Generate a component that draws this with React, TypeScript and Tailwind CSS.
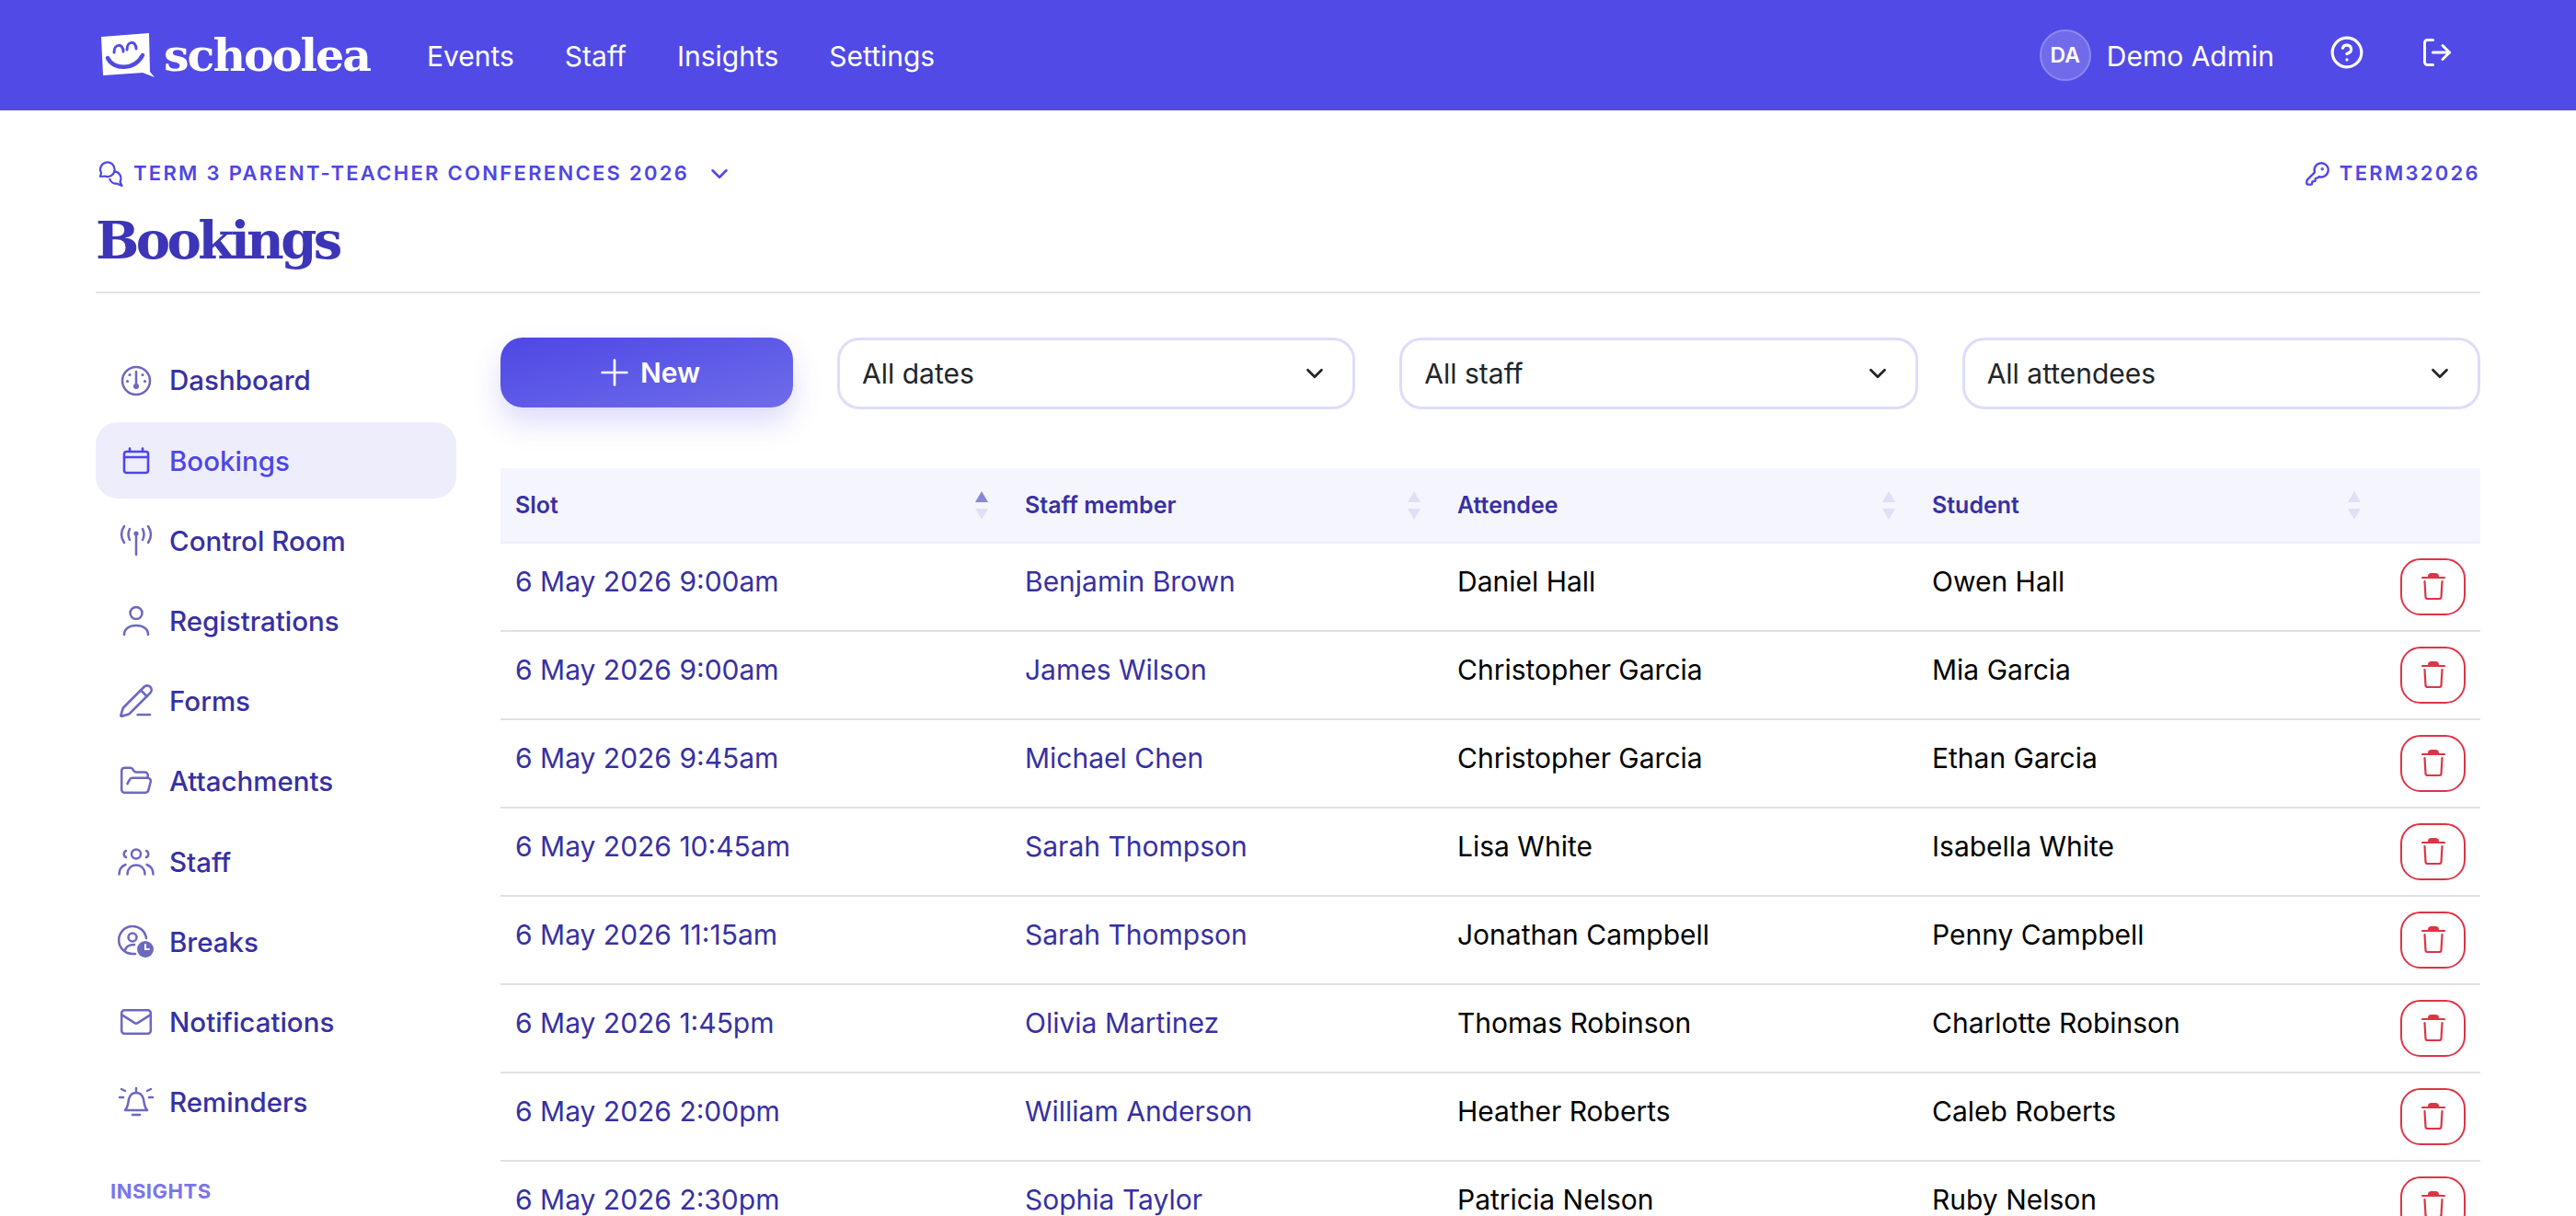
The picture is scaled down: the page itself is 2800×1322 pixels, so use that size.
import { ChevronDown, CircleHelp, FolderOpen, KeyRound, LogOut, Mail, PencilLine, Plus } from "lucide-react";

const font = "font-['Inter','Liberation_Sans',sans-serif]";

const rows = [
  ["6 May 2026 9:00am", "Benjamin Brown", "Daniel Hall", "Owen Hall"],
  ["6 May 2026 9:00am", "James Wilson", "Christopher Garcia", "Mia Garcia"],
  ["6 May 2026 9:45am", "Michael Chen", "Christopher Garcia", "Ethan Garcia"],
  ["6 May 2026 10:45am", "Sarah Thompson", "Lisa White", "Isabella White"],
  ["6 May 2026 11:15am", "Sarah Thompson", "Jonathan Campbell", "Penny Campbell"],
  ["6 May 2026 1:45pm", "Olivia Martinez", "Thomas Robinson", "Charlotte Robinson"],
  ["6 May 2026 2:00pm", "William Anderson", "Heather Roberts", "Caleb Roberts"],
  ["6 May 2026 2:30pm", "Sophia Taylor", "Patricia Nelson", "Ruby Nelson"],
];

function Logo() {
  return (
    <svg width="59" height="49" viewBox="0 0 59 49">
      <path d="M0 4 L52 0 L53 42 L58 48 L45 43 L2 46 Z" fill="#fff" />
      <path d="M7 27 C13 40 36 41 45 24" fill="none" stroke="#514ae6" strokeWidth="4.5" strokeLinecap="round" />
      <path d="M14 21 C14 11 24 11 24 20 M28 18 C28 8 38 8 38 17" fill="none" stroke="#514ae6" strokeWidth="3" strokeLinecap="round" />
    </svg>
  );
}

function ChatIcon() {
  return (
    <svg width="28" height="28" viewBox="0 0 28 28" fill="none" stroke="currentColor" strokeWidth="2.2" strokeLinejoin="round">
      <path d="M2 17 L3 13 A7.8 7.8 0 1 1 7 16.5 Z" />
      <path d="M16 11.5 A7.5 7.5 0 0 1 23.5 22.5 L25.5 27 L20 24.5 A7.5 7.5 0 0 1 12 19" />
    </svg>
  );
}

function GaugeIcon() {
  return (
    <svg width="34" height="34" viewBox="0 0 34 34" fill="none" stroke="currentColor" strokeWidth="2.5" strokeLinecap="round">
      <circle cx="17" cy="17" r="15" />
      <path d="M17 7v13" />
      <circle cx="17" cy="23" r="3" fill="currentColor" stroke="none" />
      <circle cx="10" cy="10.5" r="1.6" fill="currentColor" stroke="none" />
      <circle cx="24" cy="10.5" r="1.6" fill="currentColor" stroke="none" />
      <circle cx="7.5" cy="17.5" r="1.6" fill="currentColor" stroke="none" />
      <circle cx="26.5" cy="17.5" r="1.6" fill="currentColor" stroke="none" />
    </svg>
  );
}

function CalendarIcon() {
  return (
    <svg width="30" height="30" viewBox="0 0 30 30" fill="none" stroke="currentColor" strokeWidth="2.6" strokeLinecap="round" strokeLinejoin="round">
      <rect x="2" y="5" width="26" height="23" rx="2.5" />
      <path d="M2 11h26M8 1.5v3.5M22 1.5v3.5" />
    </svg>
  );
}

function AntennaIcon() {
  return (
    <svg width="36" height="34" viewBox="0 0 36 34" fill="none" stroke="currentColor" strokeWidth="2.5" strokeLinecap="round">
      <circle cx="18" cy="9" r="2.6" fill="currentColor" stroke="none" />
      <path d="M18 10v22" />
      <path d="M11 4c-2 4-2 8 0 12M25 4c2 4 2 8 0 12M5 1c-4 6-4 12 0 18M31 1c4 6 4 12 0 18" />
    </svg>
  );
}

function UserIcon() {
  return (
    <svg width="30" height="34" viewBox="0 0 30 34" fill="none" stroke="currentColor" strokeWidth="2.5" strokeLinecap="round">
      <circle cx="15" cy="8.5" r="6.5" />
      <path d="M2 32c0-6 5-10 13-10s13 4 13 10" />
    </svg>
  );
}

function StaffIcon() {
  return (
    <svg width="40" height="30" viewBox="0 0 40 30" fill="none" stroke="currentColor" strokeWidth="2.5" strokeLinecap="round">
      <circle cx="20" cy="6.5" r="5" />
      <path d="M9 3c-3 1-3 6 0 7M31 3c3 1 3 6 0 7" />
      <path d="M10.5 28.5c0-6 4-10 9.5-10s9.5 4 9.5 10" />
      <path d="M1.5 28.5c0-5 3-9 7-10.5M38.5 28.5c0-5-3-9-7-10.5" />
    </svg>
  );
}

function BreaksIcon() {
  return (
    <svg width="40" height="36" viewBox="0 0 40 36" fill="none" stroke="currentColor" strokeWidth="2.5" strokeLinecap="round">
      <path d="M31 14A15 15 0 1 0 16 31h3" />
      <circle cx="16" cy="13" r="4.5" />
      <path d="M8 27c1-4 5-6 10-6" />
      <circle cx="30" cy="26" r="9" fill="currentColor" stroke="none" />
      <path d="M30 21v5h4" stroke="#fff" strokeWidth="2" />
    </svg>
  );
}

function BellIcon() {
  return (
    <svg width="40" height="34" viewBox="0 0 40 34" fill="none" stroke="currentColor" strokeWidth="2.5" strokeLinecap="round" strokeLinejoin="round">
      <path d="M8 26c3-3 3-6 4-12 1-4 4-7 8-7s7 3 8 7c1 6 1 9 4 12Z" />
      <path d="M20 2v3M16 31h8M2 12h4M34 12h4M4 3l4 2M36 3l-4 2" />
    </svg>
  );
}

function TrashIcon() {
  return (
    <svg width="26" height="30" viewBox="0 0 26 30" fill="none" stroke="currentColor" strokeWidth="2.2" strokeLinecap="round" strokeLinejoin="round">
      <path d="M1 5h24" />
      <path d="M8 4c0-3 2-3 5-3s5 0 5 3Z" fill="currentColor" />
      <path d="M3.5 9l1 17c0 1.5 1 2 2.5 2h12c1.5 0 2.5-.5 2.5-2l1-17" />
    </svg>
  );
}

function SortIcon({ active }: { active?: boolean }) {
  return (
    <span className="flex flex-col items-center gap-[7px]">
      <span className={"h-0 w-0 border-x-[7px] border-b-[12px] border-x-transparent " + (active ? "border-b-[#8a86d8]" : "border-b-[#e0dff5]")} />
      <span className="h-0 w-0 border-x-[7px] border-t-[12px] border-x-transparent border-t-[#e0dff5]" />
    </span>
  );
}

function NavItem({ icon, label, active }: { icon: React.ReactNode; label: string; active?: boolean }) {
  return (
    <a className={"flex h-[83px] items-center rounded-[24px] text-[29.5px] font-medium " + (active ? "bg-[#eeedfb] text-[#4f46e5]" : "text-[#3730a3]")}>
      <span className={"flex w-[80px] shrink-0 justify-center pl-[7px] " + (active ? "text-[#4f46e5]" : "text-[#6c68bf]")}>{icon}</span>
      {label}
    </a>
  );
}

function FilterSelect({ label }: { label: string }) {
  return (
    <div className="flex h-[78px] flex-1 items-center justify-between rounded-[24px] border-[3px] border-[#dedcfb] bg-white pl-[24px] pr-[26px] text-[#212529]">
      <span>{label}</span>
      <ChevronDown size={30} strokeWidth={2.2} />
    </div>
  );
}

function Th({ label, active }: { label: string; active?: boolean }) {
  return (
    <th className="border-b-2 border-[#eeedfb] px-4 text-left text-[25px] font-semibold text-[#3730a3]">
      <div className="flex items-center justify-between pr-[8px]">
        <span className="pt-[2px]">{label}</span>
        <SortIcon active={active} />
      </div>
    </th>
  );
}

export default function App() {
  return (
    <div className={"h-[1322px] overflow-hidden bg-white text-[30px] " + font}>
      <header className="flex h-[120px] items-center justify-between bg-[#514ae6] pl-[110px] pr-[133px] text-white">
        <div className="flex items-center">
          <Logo />
          <span className="ml-[9px] mr-[62px] font-['DejaVu_Serif',serif] text-[49px] font-bold leading-none tracking-[-2px]">schoolea</span>
          <nav className="flex gap-[55px] pt-[2px]">
            <a>Events</a>
            <a>Staff</a>
            <a>Insights</a>
            <a>Settings</a>
          </nav>
        </div>
        <div className="flex items-center">
          <span className="flex h-[56px] w-[56px] items-center justify-center rounded-full border-2 border-[#8d88ee] bg-[#716bec] text-[23px] font-semibold">DA</span>
          <span className="ml-[17px] pt-[2px]">Demo Admin</span>
          <CircleHelp className="mb-[6px] ml-[60px]" size={38} strokeWidth={2} />
          <LogOut className="mb-[6px] ml-[61px]" size={36} strokeWidth={2} />
        </div>
      </header>

      <div className="px-[104px]">
        <div className="border-b-2 border-[#dee2e6] pb-[18px] pt-[52px]">
          <div className="flex items-center justify-between text-[22px] font-semibold uppercase tracking-[2.3px] text-[#4f46e5]">
            <div className="flex items-center">
              <span className="ml-[3px] mr-[10px]"><ChatIcon /></span>
              Term 3 Parent-Teacher Conferences 2026
              <ChevronDown size={30} strokeWidth={2} className="ml-[18px]" />
            </div>
            <div className="flex items-center">
              <KeyRound size={28} strokeWidth={2} className="mr-[10px]" />
              TERM32026
            </div>
          </div>
          <h1 className="mt-[18px] font-['DejaVu_Serif',serif] text-[56px] font-bold leading-[76px] tracking-[-3.6px] text-[#3d35b8]">Bookings</h1>
        </div>

        <div className="flex pt-[48px]">
          <aside className="w-[392px] shrink-0 pt-[5px]">
            <nav className="flex flex-col gap-[4.2px]">
              <NavItem icon={<GaugeIcon />} label="Dashboard" />
              <NavItem icon={<CalendarIcon />} label="Bookings" active />
              <NavItem icon={<AntennaIcon />} label="Control Room" />
              <NavItem icon={<UserIcon />} label="Registrations" />
              <NavItem icon={<PencilLine size={40} strokeWidth={1.6} />} label="Forms" />
              <NavItem icon={<FolderOpen size={38} strokeWidth={1.6} />} label="Attachments" />
              <NavItem icon={<StaffIcon />} label="Staff" />
              <NavItem icon={<BreaksIcon />} label="Breaks" />
              <NavItem icon={<Mail size={38} strokeWidth={1.6} />} label="Notifications" />
              <NavItem icon={<BellIcon />} label="Reminders" />
            </nav>
            <div className="mt-[39px] pl-[16px] text-[22px] font-bold uppercase tracking-[0.5px] text-[#7a75ea]">Insights</div>
          </aside>

          <main className="ml-[48px] min-w-0 flex-1">
            <div className="flex gap-[48px]">
              <button className="flex h-[76px] w-[318px] shrink-0 items-center justify-center gap-[5px] rounded-[24px] bg-gradient-to-br from-[#4f46e5] to-[#6f6cea] font-semibold text-white shadow-[0_16px_32px_rgba(79,70,229,0.2)]">
                <Plus size={46} strokeWidth={1.4} />
                New
              </button>
              <FilterSelect label="All dates" />
              <FilterSelect label="All staff" />
              <FilterSelect label="All attendees" />
            </div>

            <table className="mt-[64px] w-full table-fixed border-collapse">
              <colgroup>
                <col className="w-[554px]" />
                <col className="w-[470px]" />
                <col className="w-[516px]" />
                <col className="w-[506px]" />
                <col />
              </colgroup>
              <thead>
                <tr className="h-[81px] bg-[#f5f5fe]">
                  <Th label="Slot" active />
                  <Th label="Staff member" />
                  <Th label="Attendee" />
                  <Th label="Student" />
                  <th className="border-b-2 border-[#eeedfb]" />
                </tr>
              </thead>
              <tbody>
                {rows.map((r, i) => (
                  <tr key={i} className="border-b-2 border-[#dee2e6]">
                    <td className="px-4 pb-[20px] pt-[8px] text-[#3730a3]">{r[0]}</td>
                    <td className="px-4 pb-[20px] pt-[8px] text-[#3730a3]">{r[1]}</td>
                    <td className="px-4 pb-[20px] pt-[8px] text-black">{r[2]}</td>
                    <td className="px-4 pb-[20px] pt-[8px] text-black">{r[3]}</td>
                    <td className="py-[16px] pr-[16px]">
                      <button className="ml-auto flex h-[62px] w-[71px] items-center justify-center rounded-[22px] border-2 border-[#dc3545] text-[#dc3545]">
                        <TrashIcon />
                      </button>
                    </td>
                  </tr>
                ))}
              </tbody>
            </table>
          </main>
        </div>
      </div>
    </div>
  );
}
